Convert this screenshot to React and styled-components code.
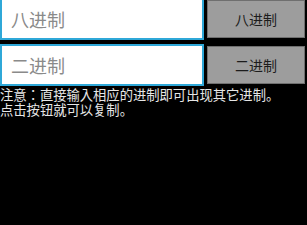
import React from "react";
import styled, { createGlobalStyle } from "styled-components";

const GlobalStyle = createGlobalStyle`
  html, body {
    margin: 0;
    padding: 0;
    background: #000;
  }
  body {
    font-family: "Noto Sans CJK SC", "Noto Sans", sans-serif;
  }
`;

const Page = styled.div`
  width: 307px;
  height: 225px;
  background: #000;
  display: flex;
  flex-direction: column;
  overflow: hidden;
`;

const Row = styled.div`
  display: flex;
  gap: 3px;
  height: 42px;
  margin-top: ${(p) => p.mt}px;
  margin-bottom: ${(p) => p.mb}px;
`;

const Input = styled.input`
  box-sizing: border-box;
  width: 204px;
  height: 42px;
  margin: 0;
  border: 2px solid #2fa8d8;
  background: #fff;
  padding: 0 0 0 9px;
  font-family: "Noto Sans CJK SC", sans-serif;
  font-size: 18px;
  outline: none;
  &::placeholder {
    color: #8a8a8a;
  }
`;

const Button = styled.button`
  box-sizing: border-box;
  width: 98px;
  height: ${(p) => p.h}px;
  margin: ${(p) => p.mt}px 0 0 0;
  border: 1px solid #6f6f6f;
  background: #9d9d9d;
  color: #1c1c1c;
  font-family: "Noto Sans CJK SC", sans-serif;
  font-size: 14px;
  padding: 0;
`;

const Note = styled.div`
  margin-top: 1px;
  display: flex;
  flex-direction: column;
`;

const NoteLine = styled.div`
  color: #e6e6e6;
  font-family: "Noto Sans CJK JP", sans-serif;
  font-size: 13.3px;
  line-height: 15px;
  height: 15px;
  overflow: visible;
  white-space: nowrap;
`;

export default function App() {
  return (
    <Page>
      <GlobalStyle />
      <Row mt={-2} mb={4}>
        <Input placeholder="八进制" />
        <Button h={38} mt={2}>八进制</Button>
      </Row>
      <Row mt={0} mb={0}>
        <Input placeholder="二进制" />
        <Button h={38} mt={2}>二进制</Button>
      </Row>
      <Note>
        <NoteLine>注意：直接输入相应的进制即可出现其它进制。</NoteLine>
        <NoteLine>点击按钮就可以复制。</NoteLine>
      </Note>
    </Page>
  );
}
